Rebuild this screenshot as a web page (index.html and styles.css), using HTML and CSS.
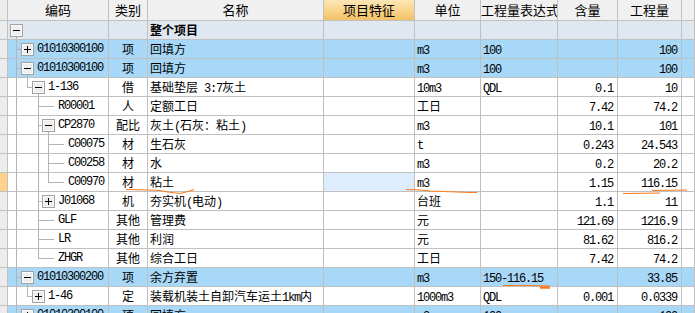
FILE: index.html
```html
<!DOCTYPE html>
<html lang="zh-CN">
<head>
    <meta charset="UTF-8">
    <title>工程量</title>
    <link rel="stylesheet" href="styles.css">
</head>
<body>

    <div class="sheet">
        <div class="row head">
            <div class="c gut"></div>
            <div class="c">编码</div>
            <div class="c">类别</div>
            <div class="c">名称</div>
            <div class="c feat-head">项目特征</div>
            <div class="c">单位</div>
            <div class="c">工程量表达式</div>
            <div class="c">含量</div>
            <div class="c">工程量</div>
            <div class="c"></div>
        </div>
        <div id="rows"></div>
    </div>

    <!-- 手画的标记 -->
    <svg class="marks" width="695" height="313">
        <polyline points="126,189.5 150,190 160,190.5 168,192 180,193.5 190,191 194,189.5"/>
        <polyline points="406,189.5 420,190 430,191 470,192.5 477,192.5"/>
        <polyline points="623,193.5 660,193"/>
        <polyline points="652,190.5 687,190"/>
        <polyline points="503,285.5 530,285.5 550,286"/>
        <polyline class="thick" points="540,287.5 550,287.5"/>
    </svg>

    <script>
        const rows = [
            { lv: 0, box: '-', name: '整个项目', cls: 'root' },
            { lv: 1, box: '+', code: '01010300100', type: '项', name: '回填方', unit: 'm3', expr: '100', qty: '100', cls: 'blue' },
            { lv: 1, box: '-', code: '01010300100', type: '项', name: '回填方', unit: 'm3', expr: '100', qty: '100', cls: 'blue' },
            { lv: 2, box: '-', last: 1, code: '1-136', type: '借', name: '基础垫层 3:7灰土', unit: '10m3', expr: 'QDL', amt: '0.1', qty: '10' },
            { lv: 3, code: 'R00001', type: '人', name: '定额工日', unit: '工日', amt: '7.42', qty: '74.2' },
            { lv: 3, box: '-', code: 'CP2870', type: '配比', name: '灰土(石灰：粘土)', unit: 'm3', amt: '10.1', qty: '101' },
            { lv: 4, code: 'C00075', type: '材', name: '生石灰', unit: 't', amt: '0.243', qty: '24.543' },
            { lv: 4, code: 'C00258', type: '材', name: '水', unit: 'm3', amt: '0.2', qty: '20.2' },
            { lv: 4, last: 1, code: 'C00970', type: '材', name: '粘土', unit: 'm3', amt: '1.15', qty: '116.15', sel: 1 },
            { lv: 3, box: '+', code: 'J01068', type: '机', name: '夯实机(电动)', unit: '台班', amt: '1.1', qty: '11' },
            { lv: 3, code: 'GLF', type: '其他', name: '管理费', unit: '元', amt: '121.69', qty: '1216.9' },
            { lv: 3, code: 'LR', type: '其他', name: '利润', unit: '元', amt: '81.62', qty: '816.2' },
            { lv: 3, last: 1, code: 'ZHGR', type: '其他', name: '综合工日', unit: '工日', amt: '7.42', qty: '74.2' },
            { lv: 1, box: '-', code: '01010300200', type: '项', name: '余方弃置', unit: 'm3', expr: '150-116.15', qty: '33.85', cls: 'blue' },
            { lv: 2, box: '+', last: 1, code: '1-46', type: '定', name: '装载机装土自卸汽车运土1km内', unit: '1000m3', expr: 'QDL', amt: '0.001', qty: '0.0339' },
            { lv: 1, box: '+', code: '01010300100', type: '项', name: '回填方', unit: 'm3', expr: '100', qty: '100', cls: 'blue' }
        ];

        // 页面上的 x：树线、展开按钮、文字起点
        const cx = [16, 27, 38, 48], bx = [10, 21, 32, 42], tx = [0, 37, 48, 58, 68];

        // 半角字符用等宽字体
        const fmt = t => (t || '').replace(/[\x20-\x7e]+/g, m => `<span class="a">${m}</span>`);

        function tree(r, anc) {
            const L = r.lv, w = L ? tx[L] - 8 : 100;
            let s = '';
            const v = (x, y1, y2) => s += `<line x1="${x - 7.5}" y1="${y1}" x2="${x - 7.5}" y2="${y2}"/>`;
            const h = (x1, x2) => s += `<line x1="${x1 - 8}" y1="9.5" x2="${x2 - 8}" y2="9.5"/>`;

            for (let a = 1; a < L; a++) if (!anc[a]) v(cx[a - 1], 0, 18);
            if (L) {
                v(cx[L - 1], 0, r.last ? 10 : 18);
                h(cx[L - 1], r.box ? bx[L] : tx[L] - 4);
            }
            if (r.box) {
                const b = bx[L] - 8;
                if (r.box === '-') v(cx[L], 15, 18);
                s += `<rect class="bx" x="${b + 0.5}" y="3.5" width="12" height="12"/>`;
                s += `<rect class="bx-in" x="${b + 1.5}" y="4.5" width="10" height="10"/>`;
                s += `<line class="sg" x1="${b + 3}" y1="9.5" x2="${b + 10}" y2="9.5"/>`;
                if (r.box === '+') s += `<line class="sg" x1="${b + 6.5}" y1="6" x2="${b + 6.5}" y2="13"/>`;
            }
            return `<svg class="tree" width="${w}" height="18">${s}</svg>`;
        }

        function loadRows() {
            const box = document.getElementById('rows');
            const anc = [];
            let html = '';
            rows.forEach(r => {
                anc[r.lv] = !!r.last;
                html += `
                    <div class="row ${r.cls || ''}">
                        <div class="c gut${r.sel ? ' gut-sel' : ''}"></div>
                        <div class="c code">${tree(r, anc)}${fmt(r.code)}</div>
                        <div class="c mid">${fmt(r.type)}</div>
                        <div class="c${r.lv === 0 ? ' bold' : ''}">${fmt(r.name)}</div>
                        <div class="c${r.sel ? ' sel' : ''}"></div>
                        <div class="c">${fmt(r.unit)}</div>
                        <div class="c">${fmt(r.expr)}</div>
                        <div class="c num">${fmt(r.amt)}</div>
                        <div class="c num">${fmt(r.qty)}</div>
                        <div class="c"></div>
                    </div>`;
            });
            box.innerHTML = html;
        }

        loadRows();
    </script>

</body>
</html>
```

FILE: styles.css
```css
* {
    box-sizing: border-box;
}

body {
    margin: 0;
    height: 313px;
    overflow: hidden;
    background-color: #ffffff;
    font-family: "Noto Sans CJK SC", sans-serif;
    font-size: 12px;
    color: #000000;
}

.sheet {
    width: 695px;
}

.row {
    display: grid;
    grid-template-columns: 8px 101px 39px 176px 91px 66px 77px 60px 64px 13px;
    height: 19px;
}

.c {
    border-right: 1px solid #c0c0c0;
    border-bottom: 1px solid #c0c0c0;
    padding: 0 2px;
    line-height: 18px;
    white-space: nowrap;
    overflow: hidden;
}

.head {
    height: 21px;
    background-color: #f0f0f0;
}

.head .c {
    line-height: 20px;
    text-align: center;
    padding: 0;
    font-size: 13px;
}

.feat-head {
    background: linear-gradient(#fde7b6, #f3c265);
}

.root {
    background-color: #dfe7f1;
}

.blue {
    background-color: #a8d8f8;
}

.gut {
    background-color: #ececec;
    padding: 0;
}

.gut-sel {
    background-color: #ffd28c;
}

.sel {
    background-color: #ddedfd;
}

.code {
    display: flex;
    align-items: center;
    padding: 0;
}

.tree {
    flex: none;
    display: block;
    shape-rendering: crispEdges;
}

.tree line {
    stroke: #b4b4b4;
    stroke-width: 1;
}

.tree .bx {
    fill: #eeeeee;
    stroke: #a2a2a2;
}

.tree .bx-in {
    fill: none;
    stroke: #fbfbfb;
}

.tree .sg {
    stroke: #000000;
}

.mid {
    text-align: center;
}

.bold {
    font-weight: bold;
}

.num {
    text-align: right;
    padding-right: 4px;
}

.a {
    font-family: "Liberation Mono", monospace;
    font-size: 12px;
    letter-spacing: -1.2px;
}

.marks {
    position: absolute;
    top: 0;
    left: 0;
    pointer-events: none;
}

.marks polyline {
    fill: none;
    stroke: #ff7a1e;
    stroke-width: 1.2;
}

.marks .thick {
    stroke-width: 2.5;
}
```
